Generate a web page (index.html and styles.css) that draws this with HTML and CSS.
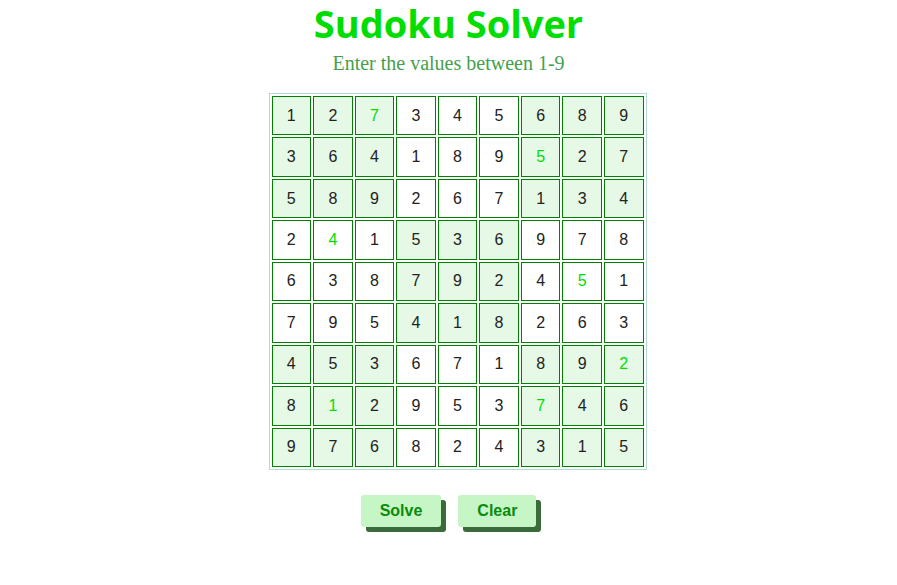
FILE: index.html
```html
<!DOCTYPE html>
<html>
<head>
<meta charset="utf-8">
<link rel="stylesheet" href="styles.css">
</head>
<body>
<main class="page">
  <h1 class="title">Sudoku Solver</h1>
  <p class="subtitle">Enter the values between 1-9</p>
  <div class="board">
    <div class="cell s">1</div><div class="cell s">2</div><div class="cell s given">7</div><div class="cell">3</div><div class="cell">4</div><div class="cell">5</div><div class="cell s">6</div><div class="cell s">8</div><div class="cell s">9</div>
    <div class="cell s">3</div><div class="cell s">6</div><div class="cell s">4</div><div class="cell">1</div><div class="cell">8</div><div class="cell">9</div><div class="cell s given">5</div><div class="cell s">2</div><div class="cell s">7</div>
    <div class="cell s">5</div><div class="cell s">8</div><div class="cell s">9</div><div class="cell">2</div><div class="cell">6</div><div class="cell">7</div><div class="cell s">1</div><div class="cell s">3</div><div class="cell s">4</div>
    <div class="cell">2</div><div class="cell given">4</div><div class="cell">1</div><div class="cell s">5</div><div class="cell s">3</div><div class="cell s">6</div><div class="cell">9</div><div class="cell">7</div><div class="cell">8</div>
    <div class="cell">6</div><div class="cell">3</div><div class="cell">8</div><div class="cell s">7</div><div class="cell s">9</div><div class="cell s">2</div><div class="cell">4</div><div class="cell given">5</div><div class="cell">1</div>
    <div class="cell">7</div><div class="cell">9</div><div class="cell">5</div><div class="cell s">4</div><div class="cell s">1</div><div class="cell s">8</div><div class="cell">2</div><div class="cell">6</div><div class="cell">3</div>
    <div class="cell s">4</div><div class="cell s">5</div><div class="cell s">3</div><div class="cell">6</div><div class="cell">7</div><div class="cell">1</div><div class="cell s">8</div><div class="cell s">9</div><div class="cell s given">2</div>
    <div class="cell s">8</div><div class="cell s given">1</div><div class="cell s">2</div><div class="cell">9</div><div class="cell">5</div><div class="cell">3</div><div class="cell s given">7</div><div class="cell s">4</div><div class="cell s">6</div>
    <div class="cell s">9</div><div class="cell s">7</div><div class="cell s">6</div><div class="cell">8</div><div class="cell">2</div><div class="cell">4</div><div class="cell s">3</div><div class="cell s">1</div><div class="cell s">5</div>
  </div>
  <div class="actions">
    <button class="btn">Solve</button>
    <button class="btn">Clear</button>
  </div>
</main>
</body>
</html>
```
FILE: styles.css
```css
html, body {
  margin: 0;
  padding: 0;
  background: #ffffff;
}
.page {
  display: flex;
  flex-direction: column;
  align-items: center;
  padding: 0 0 40px;
}
.title {
  margin: 0;
  font-family: "Open Sans", "DejaVu Sans", sans-serif;
  font-weight: 700;
  font-size: 38px;
  line-height: 46px;
  color: #00dd00;
}
.subtitle {
  margin: 5px 0 0;
  font-family: "Liberation Serif", serif;
  font-size: 20px;
  line-height: 24px;
  color: #45a04d;
}
.board {
  box-sizing: border-box;
  margin: 18px 0 0 18px;
  width: 378px;
  height: 377px;
  border: 1px solid #b3dbd6;
  padding: 2px;
  display: grid;
  grid-template-columns: repeat(9, 1fr);
  grid-template-rows: repeat(9, 1fr);
  gap: 2px;
}
.cell {
  box-sizing: border-box;
  border: 1px solid #008000;
  background: #ffffff;
  display: flex;
  align-items: center;
  justify-content: center;
  font-family: "Liberation Sans", Arial, sans-serif;
  font-size: 16px;
  color: #222222;
}
.cell.s {
  background: #e6f9e6;
}
.cell.given {
  color: #00dd00;
}
.actions {
  display: flex;
  gap: 17px;
  margin: 25px 0 0;
}
.btn {
  border: none;
  border-radius: 3px;
  background: #c6f6c6;
  color: #0a8a0a;
  font-family: "Liberation Sans", Arial, sans-serif;
  font-weight: 700;
  font-size: 16px;
  line-height: 18px;
  padding: 7px 19px;
  box-shadow: 5px 5px 0 #3a6b3a;
}
```
